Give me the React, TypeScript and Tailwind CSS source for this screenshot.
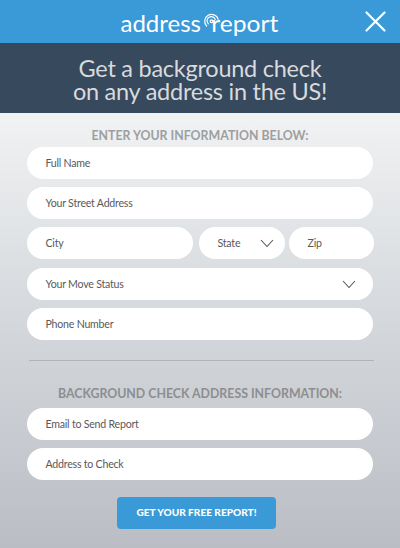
import type { ReactNode } from 'react';

function Field({ label, className = '', children }: { label: string; className?: string; children?: ReactNode }) {
  return (
    <div className={`flex h-8 items-center justify-between rounded-full bg-white pl-[18.5px] ${className}`}>
      <span className="whitespace-nowrap text-[10.6px] leading-4 tracking-[-0.22px] text-[#58595b]">{label}</span>
      {children}
    </div>
  );
}

function Chevron({ className }: { className: string }) {
  return (
    <svg className={className} width="14" height="9" viewBox="0 0 14 9" fill="none" stroke="#555" strokeWidth="1.1">
      <path d="M1 1 7 7.5 13 1" />
    </svg>
  );
}

function Logo() {
  return (
    <svg width="160" height="32" viewBox="120 8 160 32" role="img" aria-label="address report">
      <g fill="#fff" fontFamily="Lato, sans-serif" fontSize="23.5">
        <text x="120.5" y="32.4" textLength="80.5" lengthAdjust="spacingAndGlyphs">address</text>
        <text x="211.3" y="32.4" textLength="67" lengthAdjust="spacingAndGlyphs">report</text>
      </g>
      <g fill="none" stroke="#fff" strokeWidth="1.2" strokeLinecap="round">
        <path d="M206.6 26A6.9 6.9 0 1 1 218.2 19.2" />
        <path d="M208.3 23.8A4.2 4.2 0 1 1 215.2 19.4" />
        <circle cx="211.5" cy="21.3" r="1.4" />
      </g>
    </svg>
  );
}

export default function App() {
  return (
    <div className="flex h-[548px] w-[400px] flex-col overflow-hidden font-['Lato',sans-serif]">
      <header className="grid h-[43px] shrink-0 grid-cols-[120px_160px_1fr] items-center bg-[#3a99d7]">
        <div className="col-start-2 mt-2 h-8 self-start"><Logo /></div>
        <button aria-label="Close" className="mr-[14px] justify-self-end">
          <svg width="21" height="21" viewBox="0 0 21 21" stroke="#fff" strokeWidth="2.2" strokeLinecap="round">
            <path d="m1.5 1.5 18 18m0-18-18 18" />
          </svg>
        </button>
      </header>
      <h1 className="flex h-[70px] shrink-0 flex-col items-center bg-[#36495d] pt-[14px] text-[23.5px] leading-[22.5px] tracking-[-0.25px] text-[#d8dade]">
        <span>Get a background check</span>
        <span>on any address in the US!</span>
      </h1>
      <main className="flex grow flex-col bg-linear-to-b from-[#f1f2f3] via-[#d3d7db] to-[#bbbdc4] pl-[27px] pt-[14px]">
        <h2 className="w-[346px] text-center text-[12.35px] font-bold leading-[17px] text-[#9c9fa0]">ENTER YOUR INFORMATION BELOW:</h2>
        <div className="mt-[3px] flex flex-col gap-2">
          <Field label="Full Name" className="w-[346px]" />
          <Field label="Your Street Address" className="w-[346px]" />
          <div className="flex">
            <Field label="City" className="w-[166px]" />
            <Field label="State" className="ml-[6px] w-[86px]"><Chevron className="mr-[11px]" /></Field>
            <Field label="Zip" className="ml-1 w-[85px]" />
          </div>
        </div>
        <div className="mt-[9px] flex flex-col gap-2">
          <Field label="Your Move Status" className="w-[346px]"><Chevron className="mr-[17px]" /></Field>
          <Field label="Phone Number" className="w-[346px]" />
        </div>
        <hr className="ml-[2px] mt-5 w-[345px] border-[#b0b4b8]" />
        <h2 className="mt-6 w-[346px] text-center text-[12.35px] font-bold leading-[17px] text-[#8c8e90]">BACKGROUND CHECK ADDRESS INFORMATION:</h2>
        <div className="mt-[6px] flex flex-col gap-2">
          <Field label="Email to Send Report" className="w-[346px]" />
          <Field label="Address to Check" className="w-[346px]" />
        </div>
        <button className="ml-[90px] mt-[17px] h-8 w-[159px] whitespace-nowrap rounded bg-[#3a99d7] text-[10.1px] font-black text-white">GET YOUR FREE REPORT!</button>
      </main>
    </div>
  );
}
